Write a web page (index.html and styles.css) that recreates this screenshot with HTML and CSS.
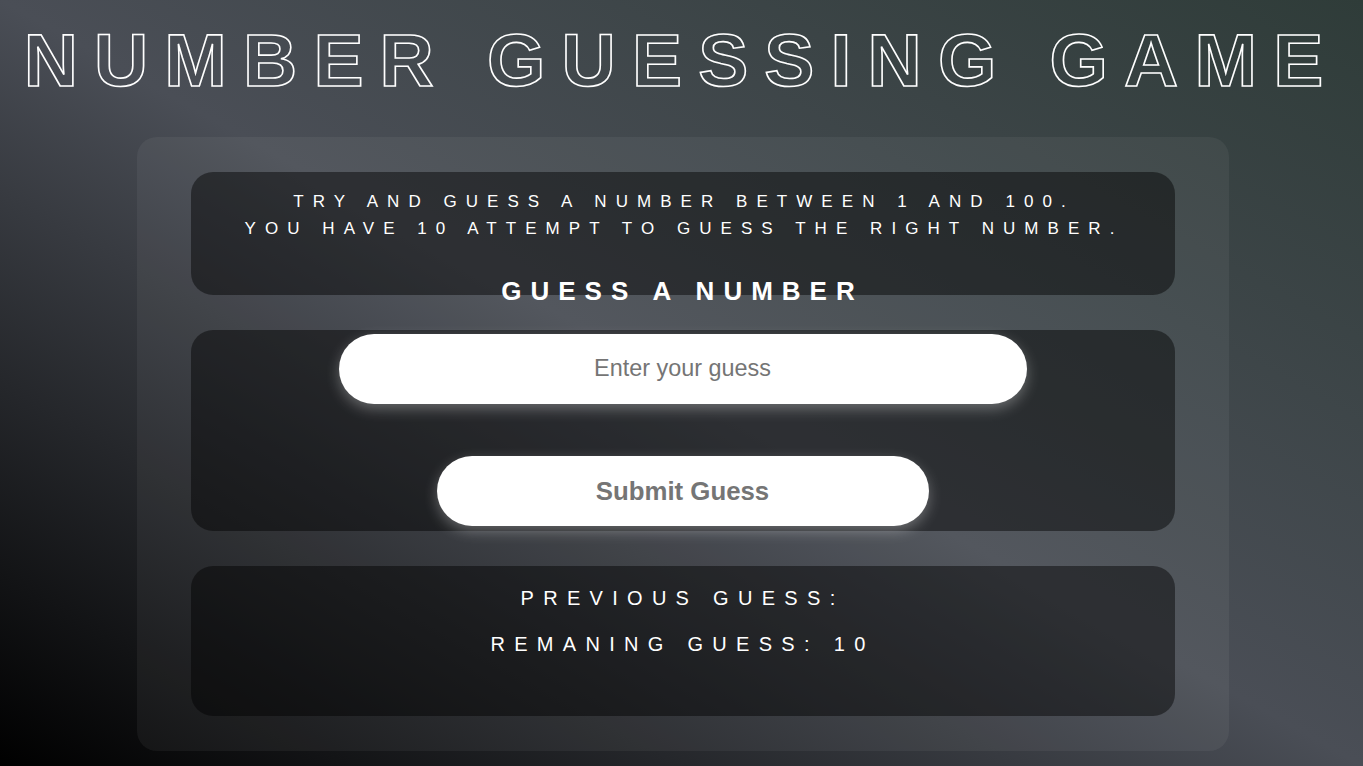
FILE: index.html
```html
<!DOCTYPE html>
<html lang="en">
<head>
<meta charset="utf-8">
<title>Number Guessing Game</title>
<link rel="stylesheet" href="styles.css">
</head>
<body>
  <h1 class="title">NUMBER GUESSING GAME</h1>
  <main class="panel">
    <section class="card card-intro">
      <p class="intro">TRY AND GUESS A NUMBER BETWEEN 1 AND 100.<br>YOU HAVE 10 ATTEMPT TO GUESS THE RIGHT NUMBER.</p>
      <h2 class="heading">GUESS A NUMBER</h2>
    </section>
    <section class="card card-form">
      <input class="guess-input" type="text" placeholder="Enter your guess">
      <button class="guess-btn" type="button">Submit Guess</button>
    </section>
    <section class="card card-result">
      <p class="result">PREVIOUS GUESS:</p>
      <p class="result">REMANING GUESS: 10</p>
    </section>
  </main>
</body>
</html>
```

FILE: styles.css
```css
html, body {
  height: 100%;
}

body {
  margin: 0;
  overflow: hidden;
  font-family: "Liberation Sans", Arial, sans-serif;
  color: #ffffff;
  background: linear-gradient(to top right, #000000 0%, #4a4e56 50%, #2f3c39 100%);
}

.title {
  margin: 0 0 35px;
  padding: 18px 0 0 0;
  font-size: 75px;
  line-height: 84px;
  font-weight: bold;
  letter-spacing: 16.2px;
  text-align: center;
  color: transparent;
  -webkit-text-stroke: 1.6px #ffffff;
}

.panel {
  width: 1092px;
  margin: 0 auto;
  position: relative;
  left: 1px;
  box-sizing: border-box;
  padding: 35px 54px;
  display: flex;
  flex-direction: column;
  gap: 35px;
  background: rgba(255, 255, 255, 0.05);
  border-radius: 20px;
}

.card {
  background: rgba(0, 0, 0, 0.45);
  border-radius: 22px;
  box-sizing: border-box;
}

.card-intro {
  height: 123px;
  padding-top: 16px;
  text-align: center;
}

.intro {
  margin: 0;
  padding-left: 3px;
  font-size: 17px;
  line-height: 27px;
  letter-spacing: 9.05px;
}

.heading {
  margin: 34px 0 0;
  font-size: 26px;
  line-height: 30px;
  font-weight: bold;
  letter-spacing: 9px;
}

.card-form {
  padding: 4px 0 5px;
  display: flex;
  flex-direction: column;
  align-items: center;
  gap: 52px;
}

.guess-input {
  width: 688px;
  height: 70px;
  box-sizing: border-box;
  border: none;
  outline: none;
  border-radius: 35px;
  background: #ffffff;
  text-align: center;
  font-family: "Liberation Sans", Arial, sans-serif;
  font-size: 23.4px;
  padding: 0 0 2px;
  color: #333333;
  box-shadow: 0 5px 14px rgba(255, 255, 255, 0.3);
}

.guess-input::placeholder {
  color: #757575;
}

.guess-btn {
  width: 492px;
  height: 70px;
  border: none;
  border-radius: 35px;
  background: #ffffff;
  font-family: "Liberation Sans", Arial, sans-serif;
  font-size: 25.8px;
  font-weight: bold;
  color: #757575;
  box-shadow: 0 5px 14px rgba(255, 255, 255, 0.3);
  cursor: pointer;
}

.card-result {
  height: 150px;
  padding-top: 21px;
  display: flex;
  flex-direction: column;
  gap: 23px;
  text-align: center;
}

.result {
  margin: 0;
  font-size: 20px;
  line-height: 23px;
  letter-spacing: 9.3px;
}
```
